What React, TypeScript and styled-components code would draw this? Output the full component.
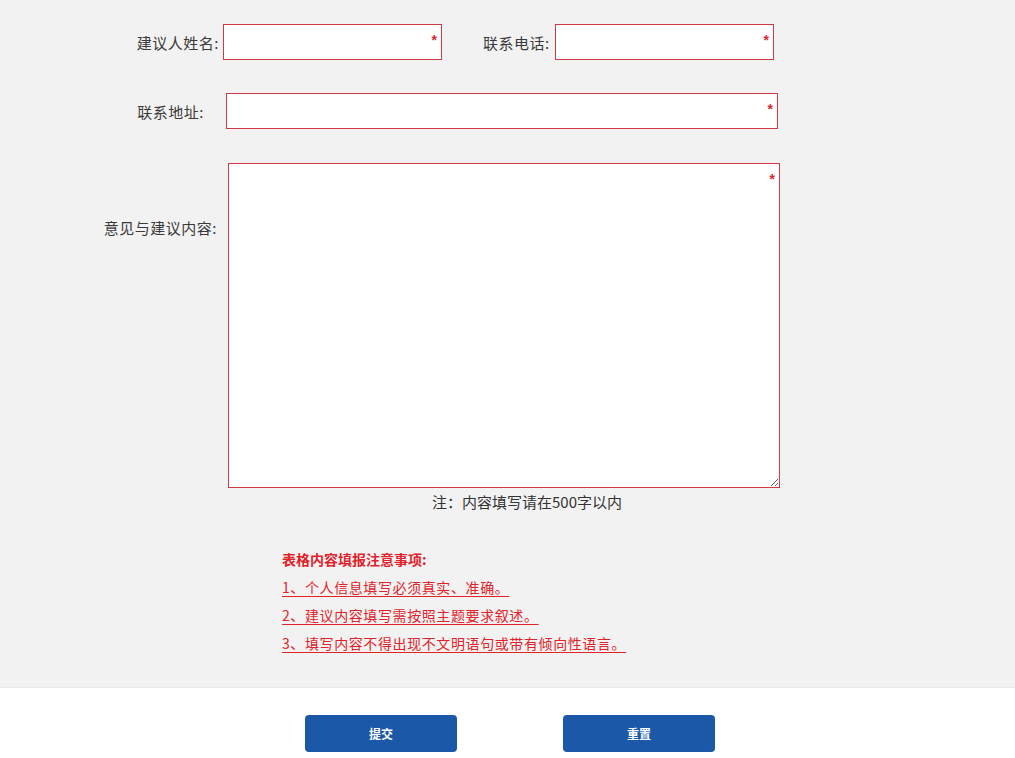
import * as React from 'react';
import styled, { createGlobalStyle } from 'styled-components';

const GlobalStyle = createGlobalStyle`
	html, body {
		margin: 0;
		padding: 0;
		background: #ffffff;
		font-family: "Noto Sans CJK SC", "Noto Sans", "Liberation Sans", sans-serif;
	}
`;

const FormArea = styled.div`
	background-color: #f2f2f2;
	height: 688px;
	box-sizing: border-box;
	padding-top: 24px;
	border-bottom: 1px solid #e8e8e8;
`;

const Row = styled.div<{ $top?: number; $align?: string }>`
	display: flex;
	flex-direction: row;
	align-items: ${props => props.$align || 'center'};
	margin-top: ${props => props.$top || 0}px;
`;

const Label = styled.label<{ $width: number; $gap: number; $padTop?: number }>`
	width: ${props => props.$width}px;
	margin-right: ${props => props.$gap}px;
	padding-top: ${props => props.$padTop || 0}px;
	text-align: right;
	font-size: 15px;
	letter-spacing: 0.5px;
	color: #3a3a3a;
	white-space: nowrap;
	flex-shrink: 0;
`;

const Field = styled.div<{ $width: number; $gapRight?: number }>`
	position: relative;
	width: ${props => props.$width}px;
	margin-right: ${props => props.$gapRight || 0}px;
	flex-shrink: 0;
`;

const TextInput = styled.input`
	display: block;
	box-sizing: border-box;
	width: 100%;
	height: 36px;
	border: 1px solid #cf3a44;
	background: #fff;
	outline: none;
	padding: 0 18px 0 6px;
	font-size: 14px;
`;

const TextArea = styled.textarea`
	display: block;
	box-sizing: border-box;
	width: 100%;
	height: 325px;
	border: 1px solid #cf3a44;
	background: #fff;
	outline: none;
	padding: 6px 18px 6px 6px;
	font-size: 14px;
	font-family: inherit;
`;

const Star = styled.span<{ $top: number }>`
	position: absolute;
	right: 5px;
	top: ${props => props.$top}px;
	color: #d42a35;
	font-size: 14px;
	font-weight: bold;
	line-height: 1;
	font-family: "Liberation Sans", sans-serif;
`;

const Note = styled.div`
	padding-left: 432px;
	margin-top: 4px;
	font-size: 15px;
	color: #333;
	line-height: 20px;
`;

const Tips = styled.div`
	padding-left: 282px;
	margin-top: 33px;
	display: flex;
	flex-direction: column;
	color: #e0232b;
	font-size: 14px;
`;

const TipsTitle = styled.div`
	font-weight: bold;
	line-height: 28px;
`;

const TipItem = styled.div`
	line-height: 28px;
	letter-spacing: 0.6px;
	text-decoration: underline;
	text-underline-offset: 3px;
`;

const Footer = styled.div`
	display: flex;
	flex-direction: row;
	justify-content: center;
	gap: 106px;
	padding-top: 27px;
	padding-left: 5px;
`;

const Button = styled.button`
	width: 152px;
	height: 37px;
	border: none;
	border-radius: 4px;
	background-color: #1b58a8;
	color: #fff;
	font-size: 12px;
	font-weight: bold;
	font-family: "Noto Sans CJK SC", sans-serif;
	cursor: pointer;
`;

const tips = [
	'1、个人信息填写必须真实、准确。',
	'2、建议内容填写需按照主题要求叙述。',
	'3、填写内容不得出现不文明语句或带有倾向性语言。',
];

export default function App() {
	return (
		<>
			<GlobalStyle />
			<FormArea>
				<Row>
					<Label $width={219} $gap={4}>建议人姓名:</Label>
					<Field $width={219} $gapRight={41}>
						<TextInput />
						<Star $top={9}>*</Star>
					</Field>
					<Label $width={62} $gap={10}>联系电话:</Label>
					<Field $width={219}>
						<TextInput />
						<Star $top={9}>*</Star>
					</Field>
				</Row>
				<Row $top={33}>
					<Label $width={204} $gap={22}>联系地址:</Label>
					<Field $width={552}>
						<TextInput />
						<Star $top={9}>*</Star>
					</Field>
				</Row>
				<Row $top={34} $align="flex-start">
					<Label $width={217} $gap={11} $padTop={54}>意见与建议内容:</Label>
					<Field $width={552}>
						<TextArea />
						<Star $top={9}>*</Star>
					</Field>
				</Row>
				<Note>注：内容填写请在500字以内</Note>
				<Tips>
					<TipsTitle>表格内容填报注意事项:</TipsTitle>
					{tips.map((tip, index) => (
						<TipItem key={index}>{tip}</TipItem>
					))}
				</Tips>
			</FormArea>
			<Footer>
				<Button>提交</Button>
				<Button>重置</Button>
			</Footer>
		</>
	);
}
